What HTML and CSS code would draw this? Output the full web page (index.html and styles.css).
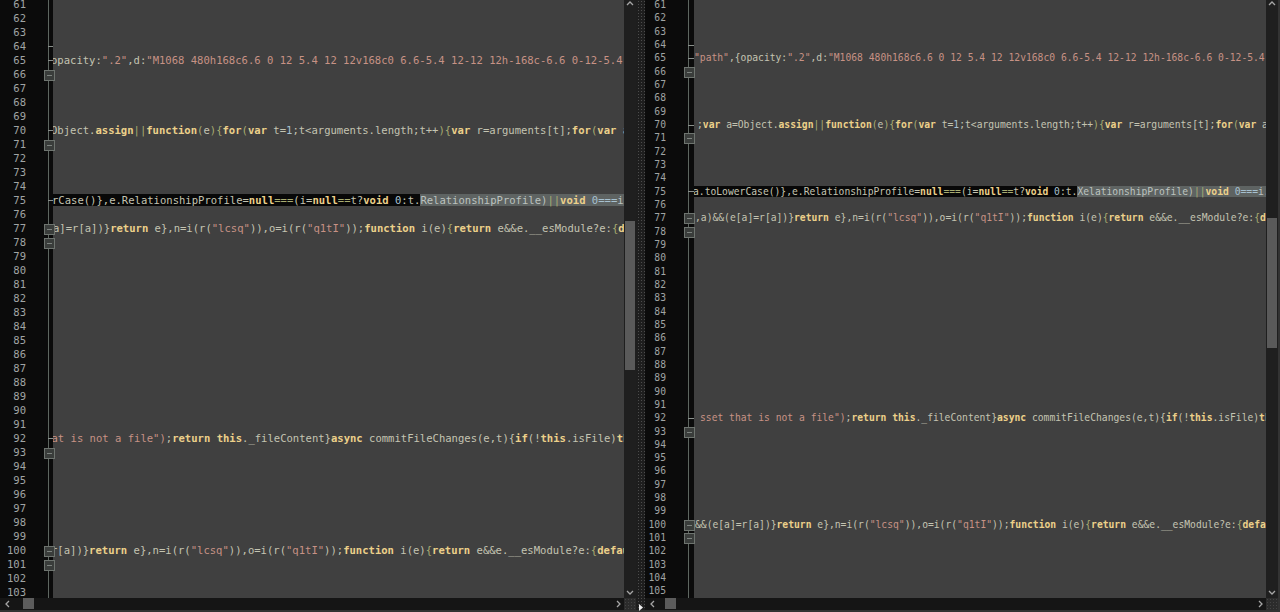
FILE: index.html
```html
<!DOCTYPE html>
<html lang="en">
<head>
<meta charset="utf-8">
<title>Compare</title>
<link rel="stylesheet" href="styles.css">
</head>
<body>
<div class="app">
  <section class="pane pane-left">
    <div class="main">
      <div class="editor" id="left"></div>
      <div class="vbar left-thumb">
        <svg class="chev up" viewBox="0 0 8 5"><path d="M1 4 4 1l3 3"/></svg>
        <span class="thumb"></span>
        <svg class="chev down" viewBox="0 0 8 5"><path d="M1 1l3 3 3-3"/></svg>
      </div>
    </div>
    <div class="hbar">
      <svg class="hchev start" viewBox="0 0 5 8"><path d="M4 1 1 4l3 3"/></svg>
      <span class="hthumb"></span>
      <svg class="hchev end" viewBox="0 0 5 8"><path d="M1 1l3 3-3 3"/></svg>
      <span class="corner"></span>
    </div>
  </section>
  <div class="splitter">
    <svg class="cursor" viewBox="0 0 4 7"><path d="M0 0v7l4-3.500z"/></svg>
  </div>
  <section class="pane pane-right">
    <div class="main">
      <div class="editor" id="right"></div>
      <div class="vbar right-thumb">
        <svg class="chev up" viewBox="0 0 8 5"><path d="M1 4 4 1l3 3"/></svg>
        <span class="thumb"></span>
        <svg class="chev down" viewBox="0 0 8 5"><path d="M1 1l3 3 3-3"/></svg>
      </div>
    </div>
    <div class="hbar">
      <svg class="hchev start" viewBox="0 0 5 8"><path d="M4 1 1 4l3 3"/></svg>
      <span class="hthumb"></span>
      <svg class="hchev end" viewBox="0 0 5 8"><path d="M1 1l3 3-3 3"/></svg>
      <span class="corner"></span>
    </div>
  </section>
</div>
<script src="app.js"></script>
</body>
</html>
```
FILE: styles.css
```css
* { box-sizing: border-box; }
html, body { margin: 0; height: 100%; background: #333; overflow: hidden; }
.app { display: flex; width: 1280px; height: 612px; padding: 0 2px 2px 0; }
.pane { display: flex; flex-direction: column; height: 100%; }
.pane-left { width: 636px; flex: none; }
.pane-right { width: 633px; flex: none; }
.splitter { width: 9px; flex: none; position: relative; background-color: #1e1e1e; background-image: radial-gradient(#4c4c4c 0.8px, transparent 1px); background-size: 3px 3px; background-position: 1px 0; }
.cursor { position: absolute; left: 3px; top: 604px; width: 4px; height: 7px; fill: #eee; }
.main { flex: 1; display: flex; min-height: 0; }
.editor { flex: 1; min-width: 0; overflow: hidden; background: #404040; font-family: "DejaVu Sans Mono", monospace; color: #c4c4b2; }
.pane-left .editor { font-size: 10.55px; }
.pane-right .editor { font-size: 9.68px; }
.row { display: flex; white-space: pre; }
.pane-left .row { height: 14px; line-height: 14px; }
.pane-right .row { height: 13.33px; line-height: 13.33px; }
.pane-left .row:first-child { margin-top: -3px; }
.pane-right .row:first-child { margin-top: -2px; }
.num { flex: none; background: #0b0b0b; color: #a0a4a4; text-align: right; }
.pane-left .num { width: 44px; padding-right: 18px; }
.pane-right .num { width: 39px; padding-right: 18px; }
.fold { flex: none; background: #0b0b0b; position: relative; }
.pane-left .fold { width: 9px; }
.pane-right .fold { width: 10px; }
.fold::before { content: ""; position: absolute; left: 4px; top: 0; bottom: 0; width: 1px; background: #5e6660; }
.mark::after { content: ""; position: absolute; left: 4px; right: 0; top: 50%; height: 1px; background: #8a908c; }
.box::after { content: ""; position: absolute; left: 0; top: calc(50% - 4.5px); width: 9px; height: 9px; background: #3a3d3b linear-gradient(#7d837f, #7d837f) center / 5px 1px no-repeat; border: 1px solid #6e746f; }
.code { flex: 1; min-width: 0; overflow: hidden; background: #404040; }
.t0 { margin-left: -1px; }
.t1 { margin-left: -2px; }
.t2 { margin-left: 1px; }
.t3 { margin-left: 0; }
.t4 { margin-left: -1.5px; }
.t5 { margin-left: 3px; }
.t6 { margin-left: 6px; }
.dark { background: #080808; }
.sel { background: #5e6362; color: #bcc2bf; }
.k { color: #ecd08a; font-weight: 700; }
.s { color: #c79285; }
.p { color: #a9ad72; }
.n { color: #a6c0d0; }
.vbar { flex: none; width: 12px; background: #1f1f1f; position: relative; }
.chev { position: absolute; left: 2px; width: 8px; height: 5px; fill: none; stroke: #a6a6a6; stroke-width: 1.3; }
.chev.up { top: 1px; }
.chev.down { bottom: 3px; }
.thumb { position: absolute; left: 1px; width: 10px; background: #5a5a5a; }
.left-thumb .thumb { top: 221px; height: 149px; }
.right-thumb .thumb { top: 218px; height: 130px; }
.hbar { flex: none; height: 12px; background: #151515; position: relative; }
.hchev { position: absolute; top: 2px; width: 5px; height: 8px; fill: none; stroke: #a6a6a6; stroke-width: 1.3; }
.hchev.start { left: 5px; }
.hchev.end { right: 15px; }
.hthumb { position: absolute; top: 0; height: 11px; background: #5c5c5c; }
.pane-left .hthumb { left: 23px; width: 11px; }
.pane-right .hthumb { left: 20px; width: 11px; }
.corner { position: absolute; right: 0; top: 0; width: 12px; height: 12px; background-color: #2c2c2c; background-image: radial-gradient(#444 0.8px, transparent 1px); background-size: 3px 3px; }
```
FILE: app.js
```js
var K = function (s) { return '<span class="k">' + s + '</span>'; };
var S = function (s) { return '<span class="s">' + s + '</span>'; };
var P = function (s) { return '<span class="p">' + s + '</span>'; };
var N = function (s) { return '<span class="n">' + s + '</span>'; };
var path = 'M1068 480h168c6.6 0 12 5.4 12 12v168c0 6.6-5.4 12-12 12h-168c-6.6 0-12-5.4';
var assign = 'Object.' + K('assign') + P('||') + K('function') + P('(') + 'e' + P(')') + P('{') + K('for') + P('(') + K('var') + ' t=' + N('1') + ';t&lt;arguments.length;t++' + P(')') + P('{') + K('var') + ' r=arguments[t];' + K('for') + P('(') + K('var') + ' a';
var ret = K('return') + ' e},n=i(r(' + S('"lcsq"') + ')),o=i(r(' + S('"q1tI"') + '));' + K('function') + ' i(e)' + P('{') + K('return') + ' e&amp;&amp;e.__esModule?e:' + P('{') + K('default') + ':e}';
var mid = '},e.RelationshipProfile=' + K('null') + P('===') + '(i=' + K('null') + P('==') + 't?' + K('void') + ' ' + N('0') + ':t.';
var commit = K('return') + ' ' + K('this') + '._fileContent}' + K('async') + ' commitFileChanges(e,t){' + K('if') + '(!' + K('this') + '.isFile)' + K('throw');

function hi(first, name) {
  return '<span class="dark">' + first + mid + '</span><span class="sel">' + name + ')' + P('||') + K('void') + ' ' + N('0===') + 'i.RelationshipProfile)</span>';
}

var leftLines = {
  65: ['t1', 'opacity:' + S('".2"') + ',d:' + S('"' + path)],
  70: ['t1', assign],
  75: ['t0', hi('rCase()', 'RelationshipProfile')],
  77: ['t3', 'a]=r[a])}' + ret],
  92: ['t4', S('at is not a file")') + ';' + commit],
  100: ['t1', 'r[a])}' + ret]
};
var rightLines = {
  65: ['t3', S('"path"') + ',{opacity:' + S('".2"') + ',d:' + S('"' + path)],
  70: ['t5', ';' + K('var') + ' a=' + assign],
  75: ['t0', hi('a.toLowerCase()', 'XelationshipProfile')],
  77: ['t2', ',a)&amp;&amp;(e[a]=r[a])}' + ret],
  92: ['t6', S('sset that is not a file")') + ';' + commit],
  100: ['t2', '&amp;&amp;(e[a]=r[a])}' + ret]
};
var boxes = { 66: 1, 71: 1, 77: 1, 78: 1, 93: 1, 100: 1, 101: 1 };
var marks = { 64: 1, 65: 1, 70: 1, 75: 1, 92: 1 };

function build(el, lines, last) {
  var html = '';
  for (var n = 61; n <= last; n++) {
    var line = lines[n];
    var cls = boxes[n] ? ' box' : (marks[n] ? ' mark' : '');
    html += '<div class="row"><span class="num">' + n + '</span><span class="fold' + cls + '"></span><span class="code">' + (line ? '<span class="' + line[0] + '">' + line[1] + '</span>' : '') + '</span></div>';
  }
  el.innerHTML = html;
}
build(document.getElementById('left'), leftLines, 103);
build(document.getElementById('right'), rightLines, 105);
```
